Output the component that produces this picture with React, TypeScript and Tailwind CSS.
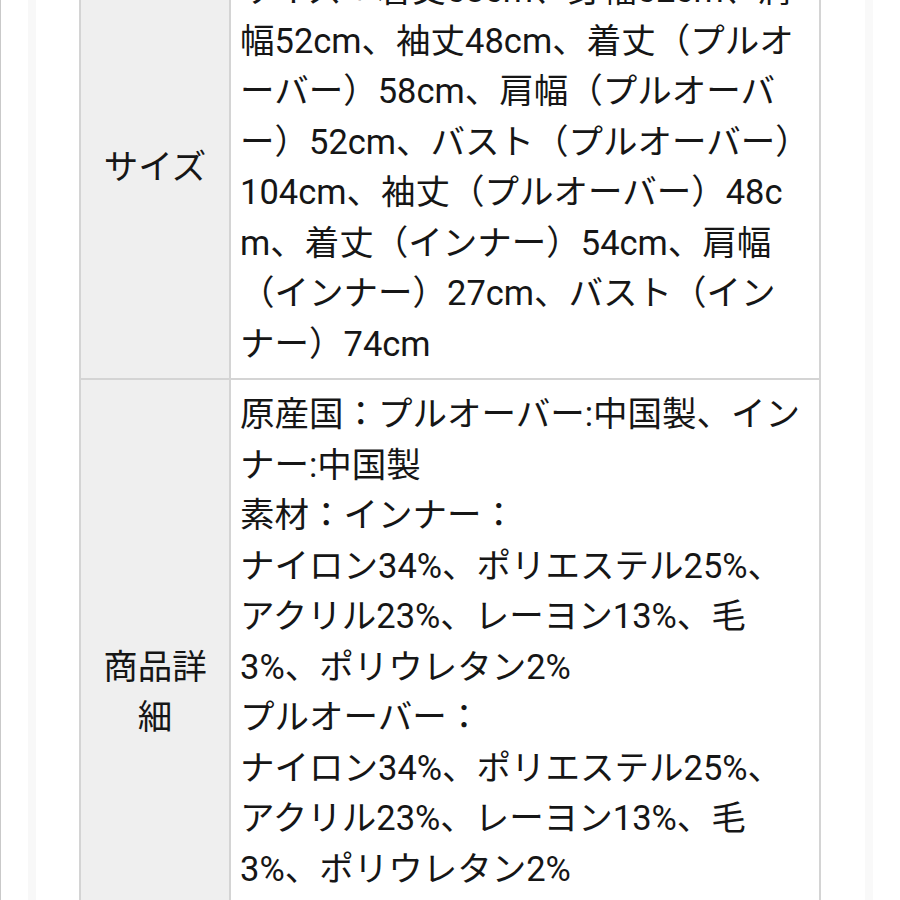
const rows = [
  {
    label: 'サイズ',
    lines: [
      'サイズ：着丈58cm、身幅52cm、肩',
      '幅52cm、袖丈48cm、着丈（プルオ',
      'ーバー）58cm、肩幅（プルオーバ',
      'ー）52cm、バスト（プルオーバー）',
      '104cm、袖丈（プルオーバー）48c',
      'm、着丈（インナー）54cm、肩幅',
      '（インナー）27cm、バスト（イン',
      'ナー）74cm',
    ],
    wrap: false,
  },
  {
    label: '商品詳細',
    lines: [
      '原産国：プルオーバー:中国製、インナー:中国製',
      '素材：インナー：',
      'ナイロン34%、ポリエステル25%、アクリル23%、レーヨン13%、毛3%、ポリウレタン2%',
      'プルオーバー：',
      'ナイロン34%、ポリエステル25%、アクリル23%、レーヨン13%、毛3%、ポリウレタン2%',
      '※画像の色味は実物と異なる場合がございます。',
    ],
    wrap: true,
  },
];

export default function App() {
  return (
    <div
      className="relative w-[900px] h-[900px] overflow-hidden bg-white text-[#161616] border-l border-[#c9c9c9]"
      style={{ fontFamily: 'Roboto, "Noto Sans CJK JP", sans-serif' }}
    >
      {/* faint side bands */}
      <div className="absolute left-[27px] top-0 bottom-0 w-[8px] bg-[#f8f8f8]" />
      <div className="absolute left-[864px] top-0 bottom-0 w-[8px] bg-[#f9f9f9]" />

      <div className="relative ml-[78px] mt-[-44px] w-[742px] border-x-2 border-[#d4d4d4] text-[34.5px] leading-[50.5px] [text-spacing-trim:space-all]">
        {rows.map((row) => (
          <div key={row.label} className="flex border-b-2 border-[#d4d4d4]">
            <div className="w-[150px] shrink-0 bg-[#efefef] border-r-2 border-[#d4d4d4] px-3 flex items-center justify-center text-center">
              {row.label}
            </div>
            <div className="flex-1 min-w-0 pl-[9px] pr-[14px] py-[9px] break-all">
              {row.lines.map((line, i) => (
                <div key={i} className={row.wrap ? '' : 'whitespace-nowrap'}>
                  {line}
                </div>
              ))}
            </div>
          </div>
        ))}
      </div>
    </div>
  );
}
